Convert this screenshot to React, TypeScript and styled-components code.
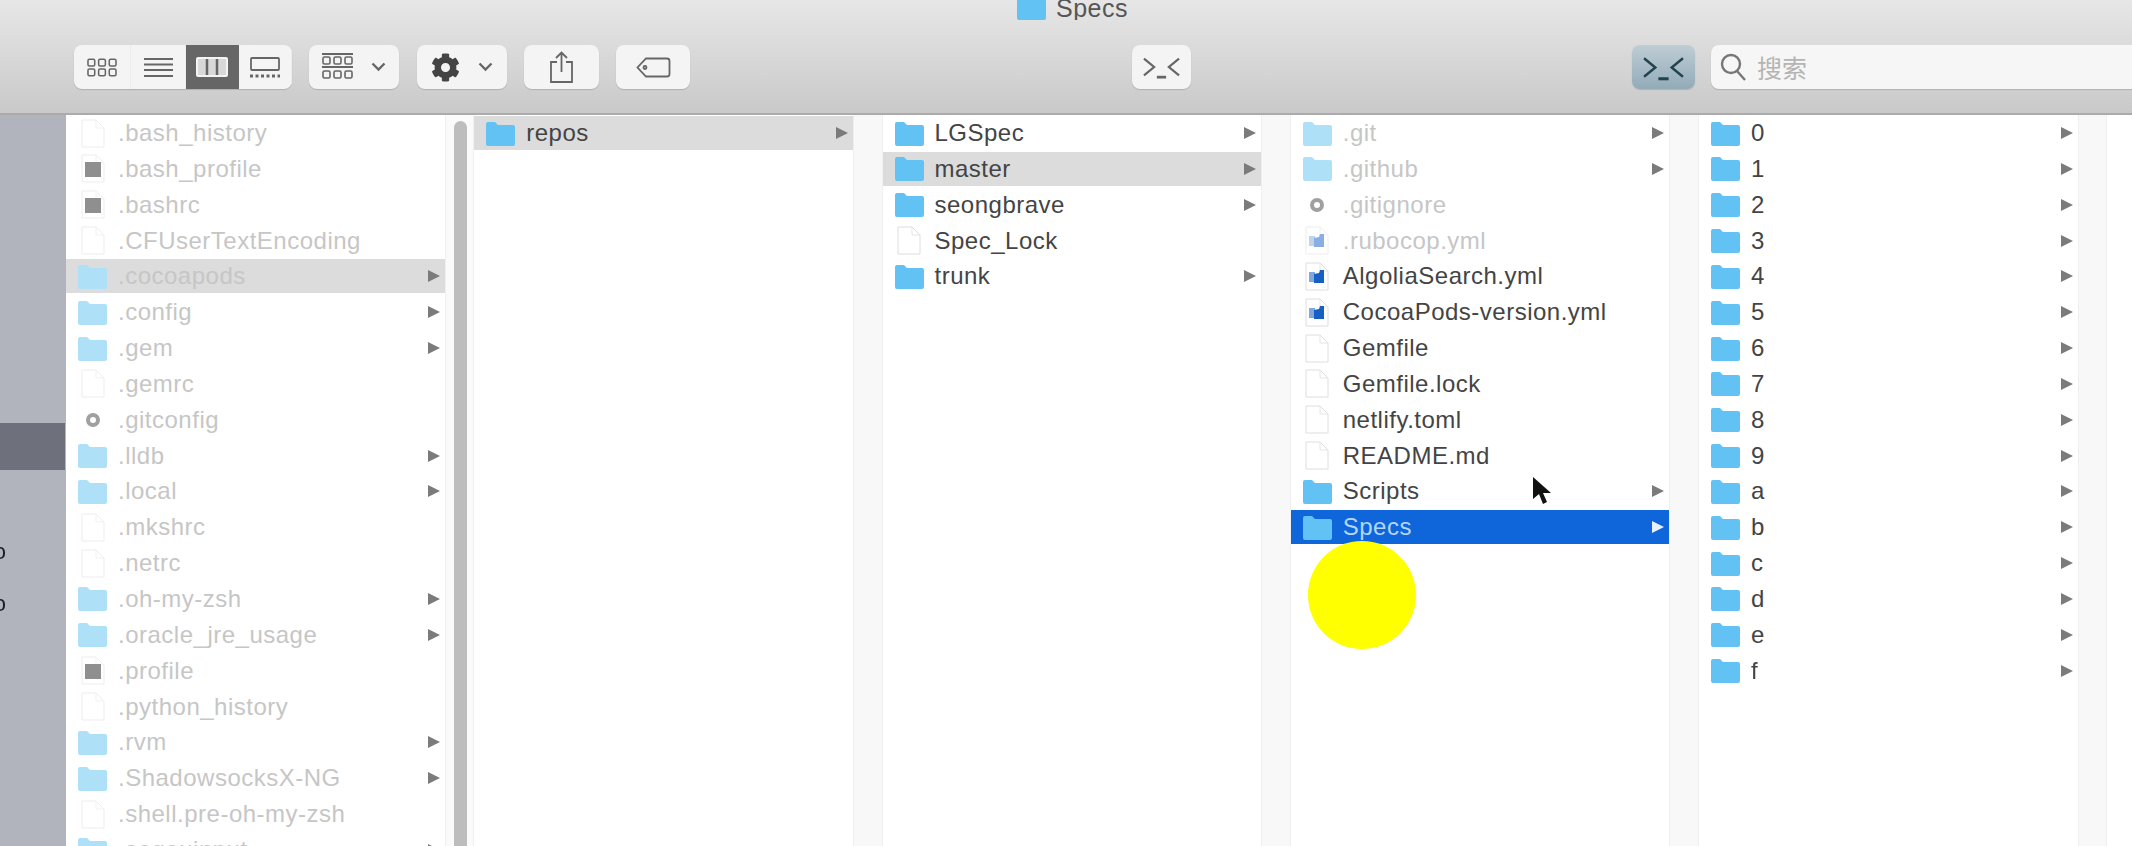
import React from 'react';
import styled, { createGlobalStyle } from 'styled-components';
import { FaCog } from 'react-icons/fa';

type Kind = 'folder' | 'doc' | 'script' | 'config' | 'yml';
type Tone = 'normal' | 'open' | 'active';

interface Item {
  name: string;
  kind: Kind;
  tone?: Tone;
  faded?: boolean;
}

const GlobalStyle = createGlobalStyle`
  html, body {
    margin: 0;
    width: 2132px;
    height: 846px;
    overflow: hidden;
    background: #fff;
    font-family: "Liberation Sans", Arial, sans-serif;
  }
`;

const Window = styled.div`
  position: relative;
  width: 2132px;
  height: 846px;
  overflow: hidden;
  filter: blur(0.7px);
`;

const Header = styled.header`
  height: 113px;
  border-bottom: 2px solid #ababab;
  background: linear-gradient(#e6e6e6, #dedede 30%, #c9c9c9);
  overflow: hidden;
`;

const TitleBar = styled.div`
  display: flex;
  align-items: flex-end;
  gap: 9px;
  height: 20px;
  padding-left: 1016px;
  overflow: hidden;
  font-size: 25px;
  letter-spacing: 0.5px;
  line-height: 24px;
  color: #555;
`;

const Toolbar = styled.div`
  display: flex;
  align-items: center;
  height: 44px;
  margin-top: 25px;
  padding-left: 74px;
`;

const Segmented = styled.div`
  display: flex;
  flex: none;
  height: 44px;
  margin-right: 17px;
  border-radius: 8px;
  overflow: hidden;
  background: #f4f4f4;
  box-shadow: 0 1px 1px #b0b0b0;
`;

const Segment = styled.div<{ $w: number; $on?: boolean }>`
  display: flex;
  flex: none;
  align-items: center;
  justify-content: center;
  box-sizing: border-box;
  width: ${(p) => p.$w}px;
  color: ${(p) => (p.$on ? '#f4f4f4' : '#666')};
  background: ${(p) => (p.$on ? '#666' : 'transparent')};
  border-right: 1px solid ${(p) => (p.$on ? 'transparent' : '#ececec')};
`;

const ToolButton = styled.div<{ $w: number; $gap?: number; $end?: number }>`
  display: flex;
  flex: none;
  align-items: center;
  justify-content: center;
  gap: ${(p) => p.$gap ?? 0}px;
  width: ${(p) => p.$w}px;
  height: 44px;
  margin-right: ${(p) => p.$end ?? 17}px;
  border-radius: 8px;
  color: #666;
  background: #f4f4f4;
  box-shadow: 0 1px 1px #b0b0b0;
`;

const TerminalOn = styled(ToolButton)`
  color: #23434f;
  background: linear-gradient(#bfcdd5, #92abb8);
`;

const SearchField = styled.div`
  display: flex;
  flex: none;
  align-items: center;
  gap: 10px;
  width: 500px;
  height: 44px;
  padding-left: 9px;
  border-radius: 8px 0 0 8px;
  font-family: "Noto Sans CJK SC", sans-serif;
  font-size: 25px;
  color: #b4b4b4;
  background: #f6f6f6;
  box-shadow: 0 1px 1px #b0b0b0;
`;

const Browser = styled.main`
  display: flex;
  height: 731px;
`;

const Sidebar = styled.nav`
  flex: none;
  width: 66px;
  padding-top: 308px;
  overflow: hidden;
  background: #b1b3bd;
`;

const SidebarActive = styled.div`
  width: 65px;
  height: 47px;
  margin-bottom: 70px;
  background: #6e707c;
`;

const SidebarLabel = styled.div`
  width: 6px;
  height: 52px;
  overflow: hidden;
  font-size: 22px;
  line-height: 24px;
  color: #1d1d22;
  direction: rtl;
  white-space: nowrap;
`;

const Column = styled.section`
  display: flex;
  flex: none;
  flex-direction: column;
  gap: 1.85px;
  width: 378.5px;
  padding-top: 1px;
  background: #fff;
`;

const Track = styled.div`
  flex: none;
  box-sizing: border-box;
  width: 29.75px;
  background: #f8f8f8;
  border-left: 1px solid #efefef;
  border-right: 1px solid #f0f0f0;
`;

const ScrollTrack = styled(Track)`
  padding: 6px 6px 0 8px;
  background: #fafafa;
`;

const ScrollThumb = styled.div`
  height: 100%;
  border-radius: 8px 8px 0 0;
  background: #bdbdbd;
`;

const rowBackground: Record<Tone, string> = {
  normal: 'transparent',
  open: '#dcdcdc',
  active: '#0f66da',
};

const rowText: Record<Tone, string> = {
  normal: '#444',
  open: '#444',
  active: '#b5d6f8',
};

const Row = styled.div<{ $tone: Tone; $faded: boolean }>`
  display: flex;
  flex: none;
  align-items: center;
  height: 34px;
  padding: 0 5px 0 11px;
  font-size: 24px;
  letter-spacing: 0.5px;
  line-height: 34px;
  white-space: nowrap;
  color: ${(p) => (p.$faded ? '#c6c6c6' : rowText[p.$tone])};
  background: ${(p) => rowBackground[p.$tone]};
`;

const RowIcon = styled.span<{ $faded: boolean }>`
  display: flex;
  flex: none;
  align-items: center;
  justify-content: center;
  width: 31px;
  margin-right: 10px;
  opacity: ${(p) => (p.$faded ? 0.5 : 1)};
`;

const RowArrow = styled.span<{ $light: boolean }>`
  width: 0;
  height: 0;
  margin-left: auto;
  border-top: 6.5px solid transparent;
  border-bottom: 6.5px solid transparent;
  border-left: 12px solid ${(p) => (p.$light ? '#e8f1fd' : '#7b7b7b')};
`;

const Highlight = styled.div`
  position: absolute;
  top: 541px;
  left: 1308px;
  width: 108px;
  height: 108px;
  border-radius: 50%;
  background: #ffff00;
`;

const Pointer = styled.svg`
  position: absolute;
  top: 476px;
  left: 1532px;
`;

const FolderIcon = ({ color = '#63c2f4' }: { color?: string }) => (
  <svg width="31" height="25" viewBox="0 0 31 25">
    <path d="M1 3a2 2 0 0 1 2-2h7l3 3h15a2 2 0 0 1 2 2v17a2 2 0 0 1-2 2H3a2 2 0 0 1-2-2z" fill={color} />
  </svg>
);

const DocShape = ({ children }: { children?: React.ReactNode }) => (
  <svg width="24" height="29" viewBox="0 0 24 29">
    <path d="M1 1h14l8 8v19H1z" fill="#fff" stroke="#dedede" />
    <path d="M15 1v8h8" fill="none" stroke="#e6e6e6" />
    {children}
  </svg>
);

const FileIcon = ({ item }: { item: Item }) => {
  switch (item.kind) {
    case 'folder':
      return <FolderIcon color={item.faded ? '#aee0f8' : '#63c2f4'} />;
    case 'doc':
      return <DocShape />;
    case 'script':
      return (
        <DocShape>
          <rect x="4" y="8" width="16" height="15" fill="#222" />
        </DocShape>
      );
    case 'yml':
      return (
        <DocShape>
          <rect x="4" y="10" width="6" height="10" fill="#7fa8dc" />
          <path d="M9 12l5-1 1-3h4v13H9z" fill="#1660c4" />
        </DocShape>
      );
    case 'config':
      return (
        <svg width="26" height="26" viewBox="0 0 26 26">
          <circle cx="13" cy="13" r="5" fill="none" stroke="#444" strokeWidth="4" />
        </svg>
      );
  }
};

const hidden = (name: string, kind: Kind, tone: Tone = 'normal'): Item => ({ name, kind, tone, faded: true });
const plain = (name: string, kind: Kind, tone: Tone = 'normal'): Item => ({ name, kind, tone });

const columns: Item[][] = [
  [
    hidden('.bash_history', 'doc'),
    hidden('.bash_profile', 'script'),
    hidden('.bashrc', 'script'),
    hidden('.CFUserTextEncoding', 'doc'),
    hidden('.cocoapods', 'folder', 'open'),
    hidden('.config', 'folder'),
    hidden('.gem', 'folder'),
    hidden('.gemrc', 'doc'),
    hidden('.gitconfig', 'config'),
    hidden('.lldb', 'folder'),
    hidden('.local', 'folder'),
    hidden('.mkshrc', 'doc'),
    hidden('.netrc', 'doc'),
    hidden('.oh-my-zsh', 'folder'),
    hidden('.oracle_jre_usage', 'folder'),
    hidden('.profile', 'script'),
    hidden('.python_history', 'doc'),
    hidden('.rvm', 'folder'),
    hidden('.ShadowsocksX-NG', 'folder'),
    hidden('.shell.pre-oh-my-zsh', 'doc'),
    hidden('.sogouinput', 'folder'),
  ],
  [plain('repos', 'folder', 'open')],
  [
    plain('LGSpec', 'folder'),
    plain('master', 'folder', 'open'),
    plain('seongbrave', 'folder'),
    plain('Spec_Lock', 'doc'),
    plain('trunk', 'folder'),
  ],
  [
    hidden('.git', 'folder'),
    hidden('.github', 'folder'),
    hidden('.gitignore', 'config'),
    hidden('.rubocop.yml', 'yml'),
    plain('AlgoliaSearch.yml', 'yml'),
    plain('CocoaPods-version.yml', 'yml'),
    plain('Gemfile', 'doc'),
    plain('Gemfile.lock', 'doc'),
    plain('netlify.toml', 'doc'),
    plain('README.md', 'doc'),
    plain('Scripts', 'folder'),
    plain('Specs', 'folder', 'active'),
  ],
  '0123456789abcdef'.split('').map((c) => plain(c, 'folder')),
];

const FileRow = ({ item }: { item: Item }) => {
  const tone = item.tone ?? 'normal';
  return (
    <Row $tone={tone} $faded={!!item.faded}>
      <RowIcon $faded={!!item.faded && item.kind !== 'folder'}>
        <FileIcon item={item} />
      </RowIcon>
      {item.name}
      {item.kind === 'folder' && <RowArrow $light={tone === 'active'} />}
    </Row>
  );
};

const TerminalIcon = ({ w, h }: { w: number; h: number }) => (
  <svg width={w} height={h} viewBox="0 0 42 26" fill="none" stroke="currentColor" strokeWidth="2.4">
    <path d="M2 4l11 9-11 9M40 4l-11 9 11 9" />
    <path d="M16 24h10" strokeWidth="3" />
  </svg>
);

const Chevron = () => (
  <svg width="15" height="10" viewBox="0 0 15 10" fill="none" stroke="currentColor" strokeWidth="2.4">
    <path d="M1.500 1.500l6 6 6-6" />
  </svg>
);

const GridDots = ({ y }: { y: number }) => (
  <>
    {[0, 11, 22].map((x) => (
      <rect key={x} x={x + 1} y={y} width="7" height="7" rx="1.5" fill="none" stroke="currentColor" strokeWidth="1.6" />
    ))}
  </>
);

export default function App() {
  return (
    <Window>
      <GlobalStyle />
      <Header>
        <TitleBar>
          <FolderIcon />
          <span>Specs</span>
        </TitleBar>
        <Toolbar>
          <Segmented>
            <Segment $w={57}>
              <svg width="30" height="21" viewBox="0 0 31 21">
                <GridDots y={2} />
                <GridDots y={12} />
              </svg>
            </Segment>
            <Segment $w={55}>
              <svg width="29" height="21" viewBox="0 0 29 21" stroke="currentColor" strokeWidth="2">
                <path d="M0 2h29M0 7.500h29M0 13h29M0 19h29" />
              </svg>
            </Segment>
            <Segment $w={53} $on>
              <svg width="32" height="20" viewBox="0 0 32 20" fill="#d8d8d8" stroke="currentColor" strokeWidth="2">
                <rect x="1" y="1" width="30" height="18" rx="1" />
                <path d="M11 2v16M21 2v16" stroke="#666" strokeWidth="2.500" />
              </svg>
            </Segment>
            <Segment $w={53}>
              <svg width="30" height="21" viewBox="0 0 30 21" fill="none" stroke="currentColor" strokeWidth="1.8">
                <rect x="1" y="1" width="28" height="12" rx="1" />
                <path d="M0 19h30" strokeWidth="3" strokeDasharray="3 2.500" />
              </svg>
            </Segment>
          </Segmented>
          <ToolButton $w={90} $gap={18} $end={18}>
            <svg width="31" height="28" viewBox="0 0 31 28" stroke="currentColor">
              <path d="M0 1h31M0 14h31" strokeWidth="2" />
              <GridDots y={4} />
              <GridDots y={18} />
            </svg>
            <Chevron />
          </ToolButton>
          <ToolButton $w={90} $gap={18}>
            <FaCog size={29} color="#444" />
            <Chevron />
          </ToolButton>
          <ToolButton $w={75}>
            <svg width="25" height="32" viewBox="0 0 25 32" fill="none" stroke="currentColor" strokeWidth="1.8">
              <path d="M8 11H2v20h21V11h-6M12.500 21V2M7 7l5.500-5.500L18 7" />
            </svg>
          </ToolButton>
          <ToolButton $w={74} $end={442}>
            <svg width="35" height="21" viewBox="0 0 35 21" fill="none" stroke="currentColor" strokeWidth="1.8">
              <path d="M10 1.500h21a2.500 2.500 0 0 1 2.500 2.500v13a2.500 2.500 0 0 1-2.500 2.500H10l-8.500-9z" />
              <circle cx="9" cy="10.500" r="1.500" />
            </svg>
          </ToolButton>
          <ToolButton $w={59} $end={441}>
            <TerminalIcon w={39} h={24} />
          </ToolButton>
          <TerminalOn $w={63} $end={16}>
            <TerminalIcon w={43} h={27} />
          </TerminalOn>
          <SearchField>
            <svg width="27" height="28" viewBox="0 0 27 28" fill="none" stroke="#777" strokeWidth="2.4">
              <circle cx="11" cy="11" r="9" />
              <path d="M17 18l8 9" />
            </svg>
            搜索
          </SearchField>
        </Toolbar>
      </Header>
      <Browser>
        <Sidebar>
          <SidebarActive />
          <SidebarLabel>o</SidebarLabel>
          <SidebarLabel>o</SidebarLabel>
        </Sidebar>
        {columns.map((items, i) => (
          <React.Fragment key={i}>
            <Column>
              {items.map((item) => (
                <FileRow key={item.name} item={item} />
              ))}
            </Column>
            {i === 0 ? (
              <ScrollTrack>
                <ScrollThumb />
              </ScrollTrack>
            ) : (
              <Track />
            )}
          </React.Fragment>
        ))}
      </Browser>
      <Highlight />
      <Pointer width="20" height="30" viewBox="0 0 20 30">
        <path d="M1 1v22l6-5 4 10 4-2-4-9h8z" fill="#111" />
      </Pointer>
    </Window>
  );
}
